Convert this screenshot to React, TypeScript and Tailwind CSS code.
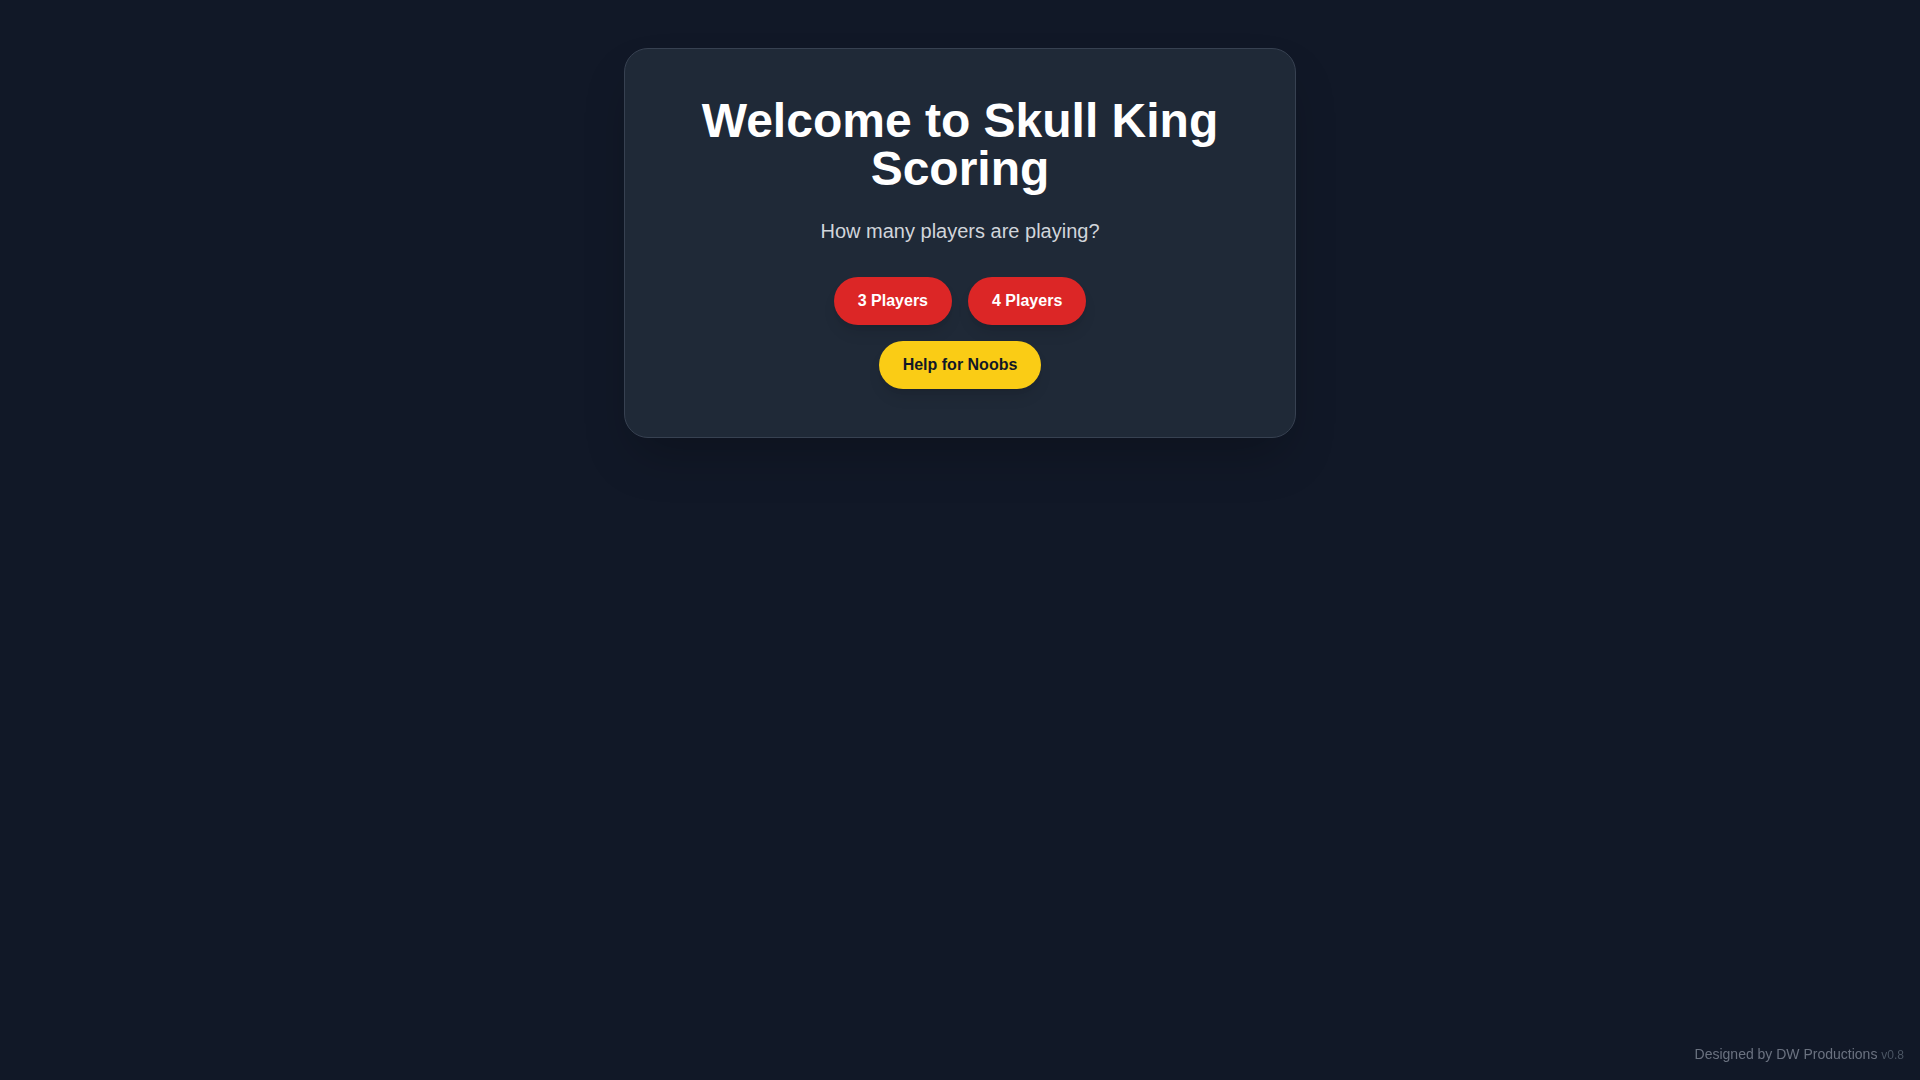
import React from "react";

export default function App() {
  return (
    <div
      className="min-h-screen bg-[#111827] text-white"
      style={{ fontFamily: '"Liberation Sans", Arial, sans-serif' }}
    >
      <div className="flex justify-center pt-12 px-4">
        <div className="w-full max-w-2xl bg-[#1f2937] border border-[#374151] rounded-3xl shadow-2xl p-12 text-center">
          <h1 className="text-5xl font-bold text-white mb-6">Welcome to Skull King Scoring</h1>
          <p className="text-xl text-[#d1d5db] mb-8">How many players are playing?</p>
          <div className="flex flex-col items-center gap-4">
            <div className="flex justify-center gap-4">
              <button className="bg-[#dc2626] text-white font-bold py-3 px-6 rounded-full shadow-lg">3 Players</button>
              <button className="bg-[#dc2626] text-white font-bold py-3 px-6 rounded-full shadow-lg">4 Players</button>
            </div>
            <button className="bg-[#facc15] text-[#111827] font-bold py-3 px-6 rounded-full shadow-lg">Help for Noobs</button>
          </div>
        </div>
      </div>
      <div className="fixed bottom-4 right-4 text-sm text-[#6b7280]">
        Designed by DW Productions <span className="text-xs text-[#4b5563]">v0.8</span>
      </div>
    </div>
  );
}
